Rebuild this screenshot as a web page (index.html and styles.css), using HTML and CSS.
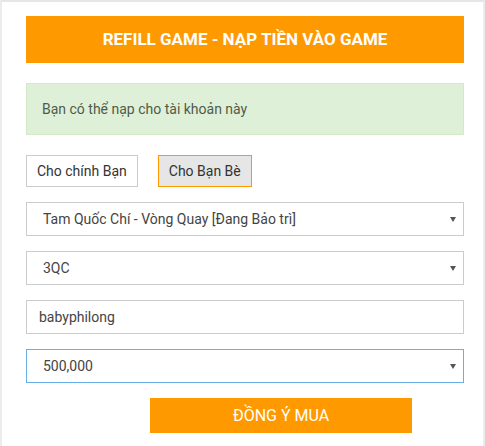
FILE: index.html
```html
<!DOCTYPE html>
<html>
  <head>
    <meta charset="utf-8">
    <title>Refill game</title>
    <link rel="stylesheet" href="styles.css">
  </head>
  <body>
    <main class="page">
      <h1 class="title">REFILL GAME - NẠP TIỀN VÀO GAME</h1>

      <div class="alert">Bạn có thể nạp cho tài khoản này</div>

      <div class="targets">
        <button class="target">Cho chính Bạn</button>
        <button class="target active">Cho Bạn Bè</button>
      </div>

      <form class="refill">
        <div class="select-wrap">
          <select class="field">
            <option>Tam Quốc Chí - Vòng Quay [Đang Bảo trì]</option>
          </select>
        </div>

        <div class="select-wrap">
          <select class="field">
            <option>3QC</option>
          </select>
        </div>

        <input type="text" class="field text" value="babyphilong">

        <div class="select-wrap">
          <select class="field focus">
            <option>500,000</option>
          </select>
        </div>

        <div class="submit-row">
          <button type="button" class="submit">ĐỒNG Ý MUA</button>
        </div>
      </form>
    </main>
  </body>
</html>
```

FILE: styles.css
```css
html, body
{
  margin: 0;
  background: #fff;
  font-family: Roboto, "Liberation Sans", Arial, sans-serif;
}

.page
{
  box-sizing: border-box;
  width: 485px;
  height: 446px;
  border-top: 2px solid #e6e6e6;
  border-left: 2px solid #ececec;
  border-right: 2px solid #ececec;
  padding: 14px 19px 0 24px;
}

.title
{
  margin: 0;
  height: 47px;
  line-height: 47px;
  background: #ff9900;
  color: #fff;
  font-size: 17px;
  font-weight: 700;
  text-align: center;
}

.alert
{
  margin-top: 20px;
  padding: 15px;
  line-height: 20px;
  font-size: 14px;
  color: #4f5b4a;
  background: #dff0d8;
  border: 1px solid #d6e9c6;
}

.targets
{
  display: flex;
  gap: 20px;
  margin-top: 20px;
}

.target
{
  height: 32px;
  padding: 0 10px;
  font-family: inherit;
  font-size: 14px;
  color: #333;
  background: #fff;
  border: 1px solid #ccc;
  border-radius: 0;
}

.target.active
{
  background: #e6e6e6;
  border-color: #ff9900;
}

.refill
{
  display: flex;
  flex-direction: column;
  gap: 15px;
  margin-top: 15px;
}

.select-wrap
{
  position: relative;
}

.select-wrap::after
{
  content: "";
  position: absolute;
  right: 8px;
  top: 15px;
  border-left: 3px solid transparent;
  border-right: 3px solid transparent;
  border-top: 5px solid #555;
  pointer-events: none;
}

.field
{
  display: block;
  box-sizing: border-box;
  width: 100%;
  height: 34px;
  margin: 0;
  padding: 0 16px;
  font-family: inherit;
  font-size: 14px;
  color: #444;
  background: #fff;
  border: 1px solid #ccc;
  border-radius: 0;
  -webkit-appearance: none;
  appearance: none;
  outline: none;
}

.field.text
{
  padding: 0 12px;
}

.field.focus
{
  border-color: #66afe9;
}

.submit-row
{
  padding-left: 124px;
}

.submit
{
  width: 262px;
  height: 35px;
  font-family: inherit;
  font-size: 16px;
  color: #fff;
  background: #ff9900;
  border: 0;
  border-radius: 0;
}
```
